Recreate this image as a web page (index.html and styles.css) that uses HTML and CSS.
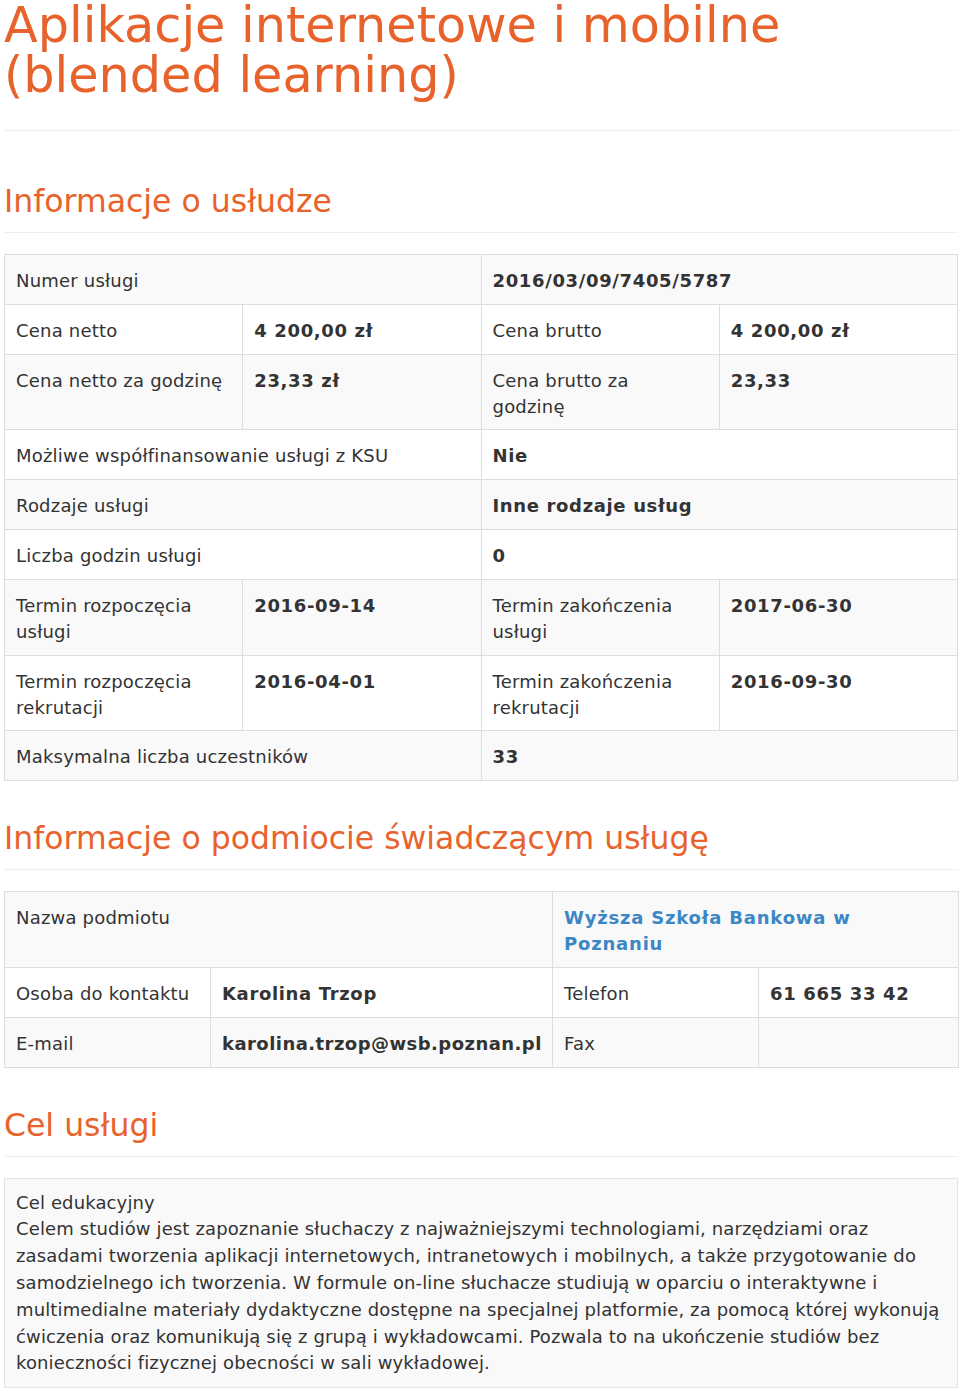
FILE: index.html
```html
<!DOCTYPE html>
<html lang="pl">
<head>
  <meta charset="UTF-8" />
  <title>Aplikacje internetowe i mobilne (blended learning)</title>
  <meta name="viewport" content="width=device-width, initial-scale=1.0" />
  <link rel="stylesheet" href="styles.css">
</head>
<body>

  <div class="page">
    <header class="page-title">
      <h1>Aplikacje internetowe i mobilne (blended learning)</h1>
    </header>

    <section class="block">
      <h2>Informacje o usłudze</h2>
      <table class="info quarter">
        <colgroup><col><col><col><col></colgroup>
        <tr>
          <td colspan="2">Numer usługi</td>
          <td colspan="2" class="val">2016/03/09/7405/5787</td>
        </tr>
        <tr>
          <td>Cena netto</td>
          <td class="val">4 200,00 zł</td>
          <td>Cena brutto</td>
          <td class="val">4 200,00 zł</td>
        </tr>
        <tr>
          <td>Cena netto za godzinę</td>
          <td class="val">23,33 zł</td>
          <td>Cena brutto za godzinę</td>
          <td class="val">23,33</td>
        </tr>
        <tr>
          <td colspan="2">Możliwe współfinansowanie usługi z KSU</td>
          <td colspan="2" class="val">Nie</td>
        </tr>
        <tr>
          <td colspan="2">Rodzaje usługi</td>
          <td colspan="2" class="val">Inne rodzaje usług</td>
        </tr>
        <tr>
          <td colspan="2">Liczba godzin usługi</td>
          <td colspan="2" class="val">0</td>
        </tr>
        <tr>
          <td>Termin rozpoczęcia usługi</td>
          <td class="val">2016-09-14</td>
          <td>Termin zakończenia usługi</td>
          <td class="val">2017-06-30</td>
        </tr>
        <tr>
          <td>Termin rozpoczęcia rekrutacji</td>
          <td class="val">2016-04-01</td>
          <td>Termin zakończenia rekrutacji</td>
          <td class="val">2016-09-30</td>
        </tr>
        <tr>
          <td colspan="2">Maksymalna liczba uczestników</td>
          <td colspan="2" class="val">33</td>
        </tr>
      </table>
    </section>

    <section class="block">
      <h2>Informacje o podmiocie świadczącym usługę</h2>
      <table class="info provider">
        <colgroup><col class="c1"><col class="c2"><col class="c3"><col class="c4"></colgroup>
        <tr>
          <td colspan="2">Nazwa podmiotu</td>
          <td colspan="2" class="val"><a href="#">Wyższa Szkoła Bankowa w Poznaniu</a></td>
        </tr>
        <tr>
          <td>Osoba do kontaktu</td>
          <td class="val">Karolina Trzop</td>
          <td>Telefon</td>
          <td class="val">61 665 33 42</td>
        </tr>
        <tr>
          <td>E-mail</td>
          <td class="val email">karolina.trzop@wsb.poznan.pl</td>
          <td>Fax</td>
          <td class="val"></td>
        </tr>
      </table>
    </section>

    <section class="block">
      <h2>Cel usługi</h2>
      <div class="well">
        <p>Cel edukacyjny</p>
        <p>Celem studiów jest zapoznanie słuchaczy z najważniejszymi technologiami, narzędziami oraz zasadami tworzenia aplikacji internetowych, intranetowych i mobilnych, a także przygotowanie do samodzielnego ich tworzenia. W formule on-line słuchacze studiują w oparciu o interaktywne i multimedialne materiały dydaktyczne dostępne na specjalnej platformie, za pomocą której wykonują ćwiczenia oraz komunikują się z grupą i wykładowcami. Pozwala to na ukończenie studiów bez konieczności fizycznej obecności w sali wykładowej.</p>
      </div>
    </section>
  </div>

</body>
</html>
```

FILE: styles.css
```css
* {
  margin: 0;
  padding: 0;
  box-sizing: border-box;
}

body {
  font-family: 'DejaVu Sans', sans-serif;
  font-size: 18px;
  color: #333;
  background: #fff;
}

.page {
  width: 954px;
  margin-left: 4px;
}

.page-title {
  padding-bottom: 30px;
  border-bottom: 1px solid #eee;
  margin-bottom: 13px;
}

.page-title h1 {
  font-size: 49.3px;
  line-height: 50px;
  font-weight: 400;
  color: #e8632c;
}

.block h2 {
  font-size: 31.5px;
  line-height: 40px;
  font-weight: 400;
  color: #e8632c;
  padding: 37px 0 11px;
  border-bottom: 1px solid #eee;
  margin-bottom: 21px;
}

.info {
  width: 100%;
  table-layout: fixed;
  border-collapse: collapse;
  letter-spacing: 0.2px;
}

.info td {
  border: 1px solid #ddd;
  padding: 13px 11px 9.8px;
  line-height: 26px;
  vertical-align: top;
}

.quarter td {
  padding-right: 16px;
}

.info tr:nth-child(odd) td {
  background: #f9f9f9;
}

.info .val {
  font-weight: 700;
  letter-spacing: 0.65px;
}

.info .email {
  letter-spacing: 0.45px;
}

.info a {
  color: #3b87c6;
  text-decoration: none;
  letter-spacing: 0.8px;
}

.provider .c1 { width: 206px; }
.provider .c2 { width: 342px; }
.provider .c3 { width: 206px; }
.provider .c4 { width: 200px; }

.well {
  background: #f9f9f9;
  border: 1px solid #e3e3e3;
  padding: 11px 11px 10px;
  line-height: 26.8px;
  letter-spacing: 0.13px;
}
```
